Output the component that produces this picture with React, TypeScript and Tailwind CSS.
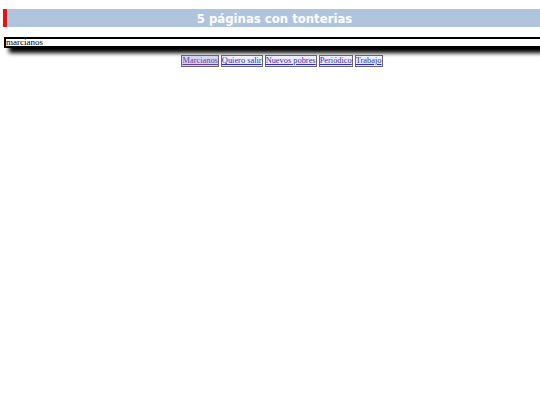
import React from "react";

export default function App() {
  const links = ["Marcianos", "Quiero salir", "Nuevos pobres", "Periódico", "Trabajo"];
  return (
    <div className="w-[540px] h-[405px] bg-white overflow-hidden">
      <div className="pt-[9px] pl-[3px]">
        <div className="h-[18px] bg-[#b0c4de] border-l-[4px] border-[#ee1111] flex items-center justify-center">
          <span className="text-white font-bold text-[13px] leading-none pl-[2px]" style={{ fontFamily: '"DejaVu Sans Condensed", "DejaVu Sans", sans-serif' }}>
            5 páginas con tonterias
          </span>
        </div>
      </div>
      <div className="mt-[10px] pl-[4px] w-[570px]">
        <div
          className="h-[11px] border-2 border-black bg-white flex items-center shadow-[5px_5px_4px_#000] text-[9px] leading-none text-black"
          style={{ fontFamily: '"Liberation Serif", serif' }}
        >
          marcianos
        </div>
      </div>
      <div className="mt-[7px] flex justify-center gap-[2px] pl-[24px]" style={{ fontFamily: '"Liberation Serif", serif' }}>
        {links.map((l, i) => (
          <a
            key={l}
            href="#"
            className={
              "text-[8.4px] leading-[10px] underline border border-[#666] " +
              (i === 0 ? "text-[#6a3d9a] bg-[#d4d4f2]" : "text-[#2a2ad8] bg-[#eef0ff]")
            }
          >
            {l}
          </a>
        ))}
      </div>
    </div>
  );
}
